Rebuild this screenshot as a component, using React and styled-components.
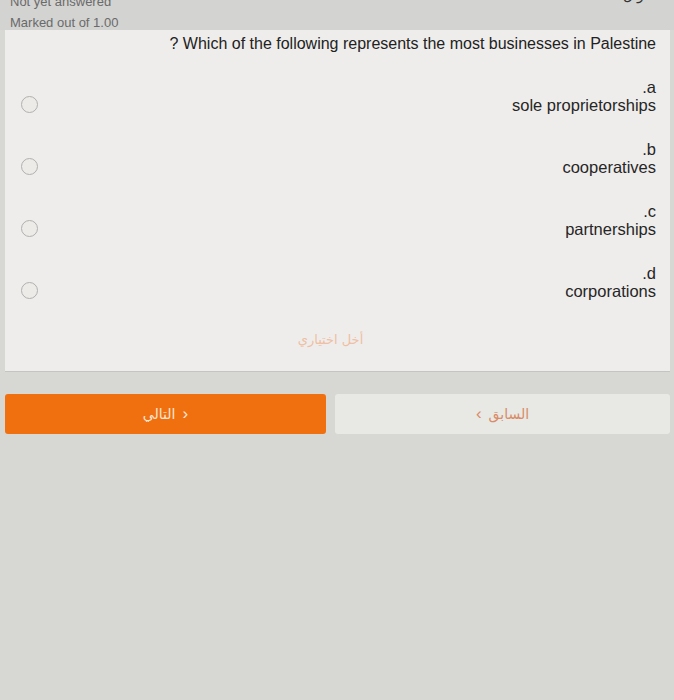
import React from "react";
import styled, { createGlobalStyle } from "styled-components";

const GlobalStyle = createGlobalStyle`
  html, body {
    margin: 0;
    padding: 0;
    background: #d6d6d3;
    font-family: "Liberation Sans", Arial, "DejaVu Sans", sans-serif;
  }
  body {
    min-height: 700px;
  }
`;

const Page = styled.div`
  width: 674px;
  min-height: 700px;
  background: #d7d7d4;
  overflow: hidden;
`;

const Header = styled.div`
  position: relative;
  height: 30px;
  padding-left: 10px;
  background: #d3d3d1;
  color: #6a6a6a;
  font-size: 13px;
  line-height: 15px;
  display: flex;
  flex-direction: column;
  overflow: hidden;
`;

const HeaderLine = styled.div`
  margin-top: ${(p) => p.$top || 0}px;
`;

const QuestionNo = styled.div`
  position: absolute;
  right: 18px;
  top: -12px;
  font-size: 14px;
  color: #333;
  font-family: "DejaVu Sans", sans-serif;
`;

const Card = styled.div`
  margin: 0 4px 0 5px;
  background: #eeedeb;
  border-bottom: 1px solid #c4c4c2;
  padding: 4px 14px 22px 16px;
  display: flex;
  flex-direction: column;
`;

const Question = styled.div`
  text-align: right;
  font-size: 16px;
  line-height: 20px;
  color: #222;
  margin-bottom: 24px;
`;

const Options = styled.div`
  display: flex;
  flex-direction: column;
  gap: 26px;
`;

const OptionRow = styled.div`
  display: flex;
  justify-content: space-between;
  align-items: flex-end;
`;

const Radio = styled.span`
  width: 15px;
  height: 15px;
  border: 1.5px solid #b0b0ae;
  border-radius: 50%;
  background: #ecebe8;
  position: relative;
  top: -1px;
`;

const Label = styled.div`
  text-align: right;
  font-size: 16.5px;
  line-height: 18px;
  color: #262626;
`;

const Clear = styled.div`
  margin-top: 31px;
  padding-right: 16px;
  text-align: center;
  font-family: "DejaVu Sans", sans-serif;
  font-size: 13px;
  line-height: 18px;
  color: #efbfa4;
`;

const Nav = styled.div`
  display: grid;
  grid-template-columns: 321px 335px;
  gap: 9px;
  margin: 22px 4px 0 5px;
`;

const NavButton = styled.div`
  height: 40px;
  border-radius: 3px;
  display: flex;
  align-items: center;
  justify-content: center;
  gap: 7px;
  font-family: "DejaVu Sans", sans-serif;
  font-size: 14px;
  background: ${(p) => (p.$primary ? "#f0700f" : "#e8e8e5")};
  color: ${(p) => (p.$primary ? "#fbe6d6" : "#d98c66")};
`;

const Chevron = styled.span`
  font-size: 17px;
  font-family: "Liberation Sans", Arial, sans-serif;
`;

const options = [
  { key: ".a", text: "sole proprietorships" },
  { key: ".b", text: "cooperatives" },
  { key: ".c", text: "partnerships" },
  { key: ".d", text: "corporations" },
];

export default function App() {
  return (
    <Page>
      <GlobalStyle />
      <Header>
        <HeaderLine $top={-6}>Not yet answered</HeaderLine>
        <HeaderLine $top={6}>Marked out of 1.00</HeaderLine>
        <QuestionNo dir="rtl">سؤال 17</QuestionNo>
      </Header>
      <Card>
        <Question>? Which of the following represents the most businesses in Palestine</Question>
        <Options>
          {options.map((o) => (
            <OptionRow key={o.key}>
              <Radio />
              <Label>
                <div>{o.key}</div>
                <div>{o.text}</div>
              </Label>
            </OptionRow>
          ))}
        </Options>
        <Clear>أخل اختياري</Clear>
      </Card>
      <Nav>
        <NavButton $primary>
          <span>التالي</span>
          <Chevron>›</Chevron>
        </NavButton>
        <NavButton>
          <Chevron>‹</Chevron>
          <span>السابق</span>
        </NavButton>
      </Nav>
    </Page>
  );
}
